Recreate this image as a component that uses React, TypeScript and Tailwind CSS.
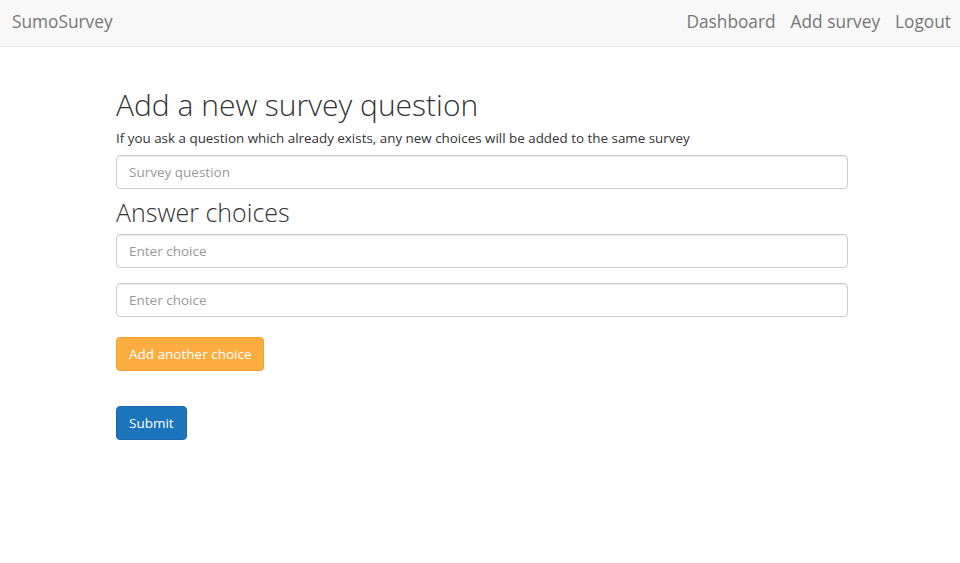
import React from "react";

const font = { fontFamily: '"Open Sans", "Liberation Sans", sans-serif' };

function Navbar() {
  return (
    <nav className="flex h-[47px] items-center justify-between border-b border-[#e7e7e7] bg-[#f8f8f8] pb-[3px] pl-3 pr-[9px] text-[17.3px] text-[#777]">
      <span>SumoSurvey</span>
      <div className="flex items-center gap-[15px]">
        <span>Dashboard</span>
        <span>Add survey</span>
        <span>Logout</span>
      </div>
    </nav>
  );
}

function TextInput({ placeholder }: { placeholder: string }) {
  return (
    <input
      type="text"
      placeholder={placeholder}
      className="block h-[34px] w-full rounded-[4px] border border-[#ccc] bg-white px-3 text-[13.5px] text-[#555] shadow-[inset_0_1px_1px_rgba(0,0,0,0.075)] outline-none placeholder:text-[#999]"
    />
  );
}

export default function App() {
  return (
    <div className="min-h-[563px] bg-white text-[#333]" style={font}>
      <Navbar />
      <main className="ml-[116px] w-[732px] pt-[40px]">
        <h1 className="text-[30px] font-light leading-[36px] text-[#333]">
          Add a new survey question
        </h1>
        <p className="mt-[5px] text-[13.4px] leading-[20px]">
          If you ask a question which already exists, any new choices will be added to the same survey
        </p>
        <div className="mt-[7px]">
          <TextInput placeholder="Survey question" />
        </div>
        <h2 className="mt-[8px] text-[25px] font-light leading-[30px] text-[#333]">
          Answer choices
        </h2>
        <div className="mt-[7px] flex flex-col gap-[15px]">
          <TextInput placeholder="Enter choice" />
          <TextInput placeholder="Enter choice" />
        </div>
        <button className="mt-[20px] block h-[34px] rounded-[4px] border border-[#f6a02a] bg-[#fbad3f] px-3 text-[13.5px] text-white">
          Add another choice
        </button>
        <button className="mt-[35px] block h-[34px] rounded-[4px] border border-[#1a6aab] bg-[#1c75bc] px-3 text-[13.5px] text-white">
          Submit
        </button>
      </main>
    </div>
  );
}
